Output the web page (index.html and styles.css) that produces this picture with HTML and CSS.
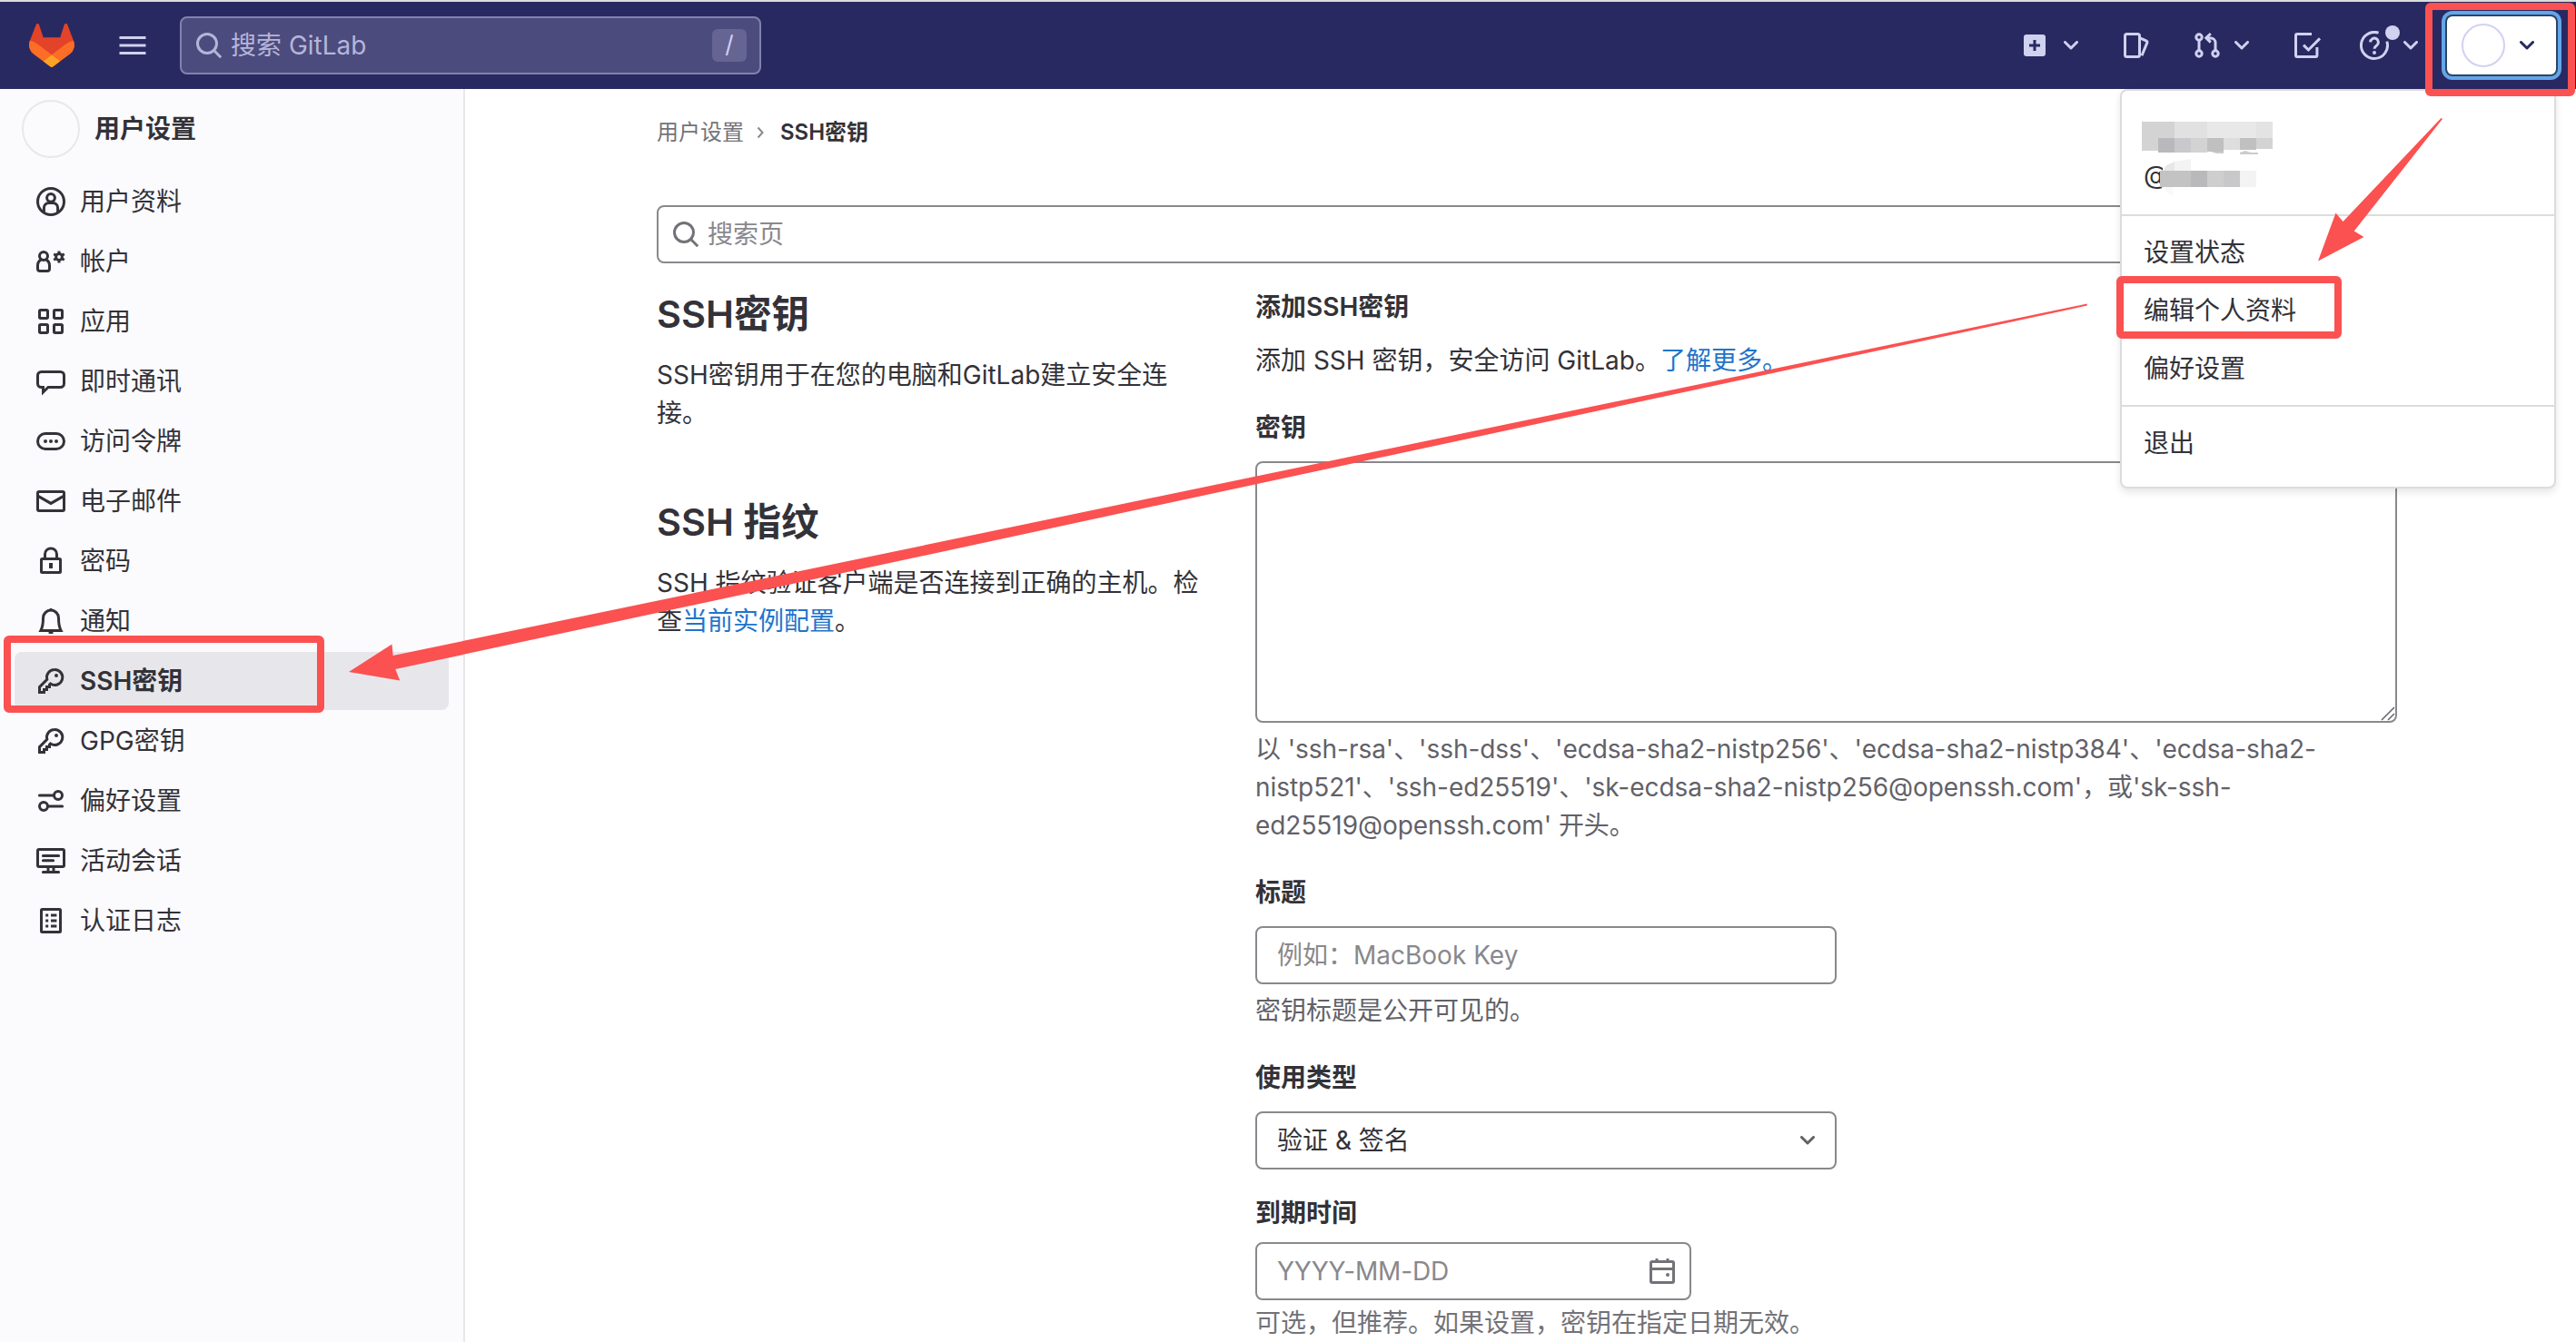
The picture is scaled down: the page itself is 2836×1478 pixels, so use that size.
FILE: index.html
```html
<!DOCTYPE html>
<html lang="zh-CN">
<head>
    <meta charset="UTF-8">
    <meta name="viewport" content="width=device-width, initial-scale=1.0">
    <title>SSH密钥 · 用户设置 · GitLab</title>
    <link rel="stylesheet" href="styles.css">
</head>
<body>
    <!-- Top navigation -->
    <header class="navbar">
        <svg class="logo" viewBox="0 0 25 24">
            <path fill="#E24329" d="m24.507 9.5-.034-.09L21.082.562a.896.896 0 0 0-1.694.091l-2.29 7.01H7.825L5.535.653a.898.898 0 0 0-1.694-.09L.451 9.411.416 9.5a6.297 6.297 0 0 0 2.09 7.278l.012.01.03.022 5.16 3.867 2.56 1.935 1.554 1.176a1.051 1.051 0 0 0 1.268 0l1.555-1.176 2.56-1.935 5.197-3.89.014-.01A6.297 6.297 0 0 0 24.507 9.5z"/>
            <path fill="#FC6D26" d="m24.507 9.5-.034-.09a11.44 11.44 0 0 0-4.56 2.051l-7.447 5.632 4.742 3.584 5.197-3.89.014-.01A6.297 6.297 0 0 0 24.507 9.5z"/>
            <path fill="#FCA326" d="m7.707 20.677 2.56 1.935 1.555 1.176a1.051 1.051 0 0 0 1.268 0l1.555-1.176 2.56-1.935-4.743-3.584-4.755 3.584z"/>
            <path fill="#FC6D26" d="M5.01 11.461a11.43 11.43 0 0 0-4.56-2.05L.416 9.5a6.297 6.297 0 0 0 2.09 7.278l.012.01.03.022 5.16 3.867 4.745-3.584-7.444-5.632z"/>
        </svg>
        <svg class="icon burger" viewBox="0 0 16 16"><path d="M.75 3.75h14.5M.75 8h14.5M.75 12.25h14.5"/></svg>
        <div class="nav-search">
            <svg class="icon" viewBox="0 0 16 16"><circle cx="7" cy="7" r="5.25"/><path d="m11 11 3.6 3.6"/></svg>
            <span class="nav-search-text">搜索 GitLab</span>
            <kbd>/</kbd>
        </div>
        <nav class="nav-items">
            <div class="nav-item nav-new">
                <svg class="icon" viewBox="0 0 16 16"><rect class="solid" x="2" y="2" width="12" height="12" rx="1.5"/><path class="cut" d="M8 5v6M5 8h6"/></svg>
                <svg class="chevron" viewBox="0 0 16 10"><path d="m1.5 1.5 6.5 6.5 6.5-6.5"/></svg>
            </div>
            <div class="nav-item nav-issues">
                <svg class="icon" viewBox="0 0 16 16"><rect x="1.75" y="1.75" width="8" height="12.5" rx="1"/><path d="m10 3.9 3.6 1.7a.7.7 0 0 1 .35.85L11 13.6"/></svg>
            </div>
            <div class="nav-item nav-merge">
                <svg class="icon" viewBox="0 0 16 16"><circle cx="3.5" cy="3.5" r="1.6"/><circle cx="3.5" cy="12.5" r="1.6"/><circle cx="12.5" cy="12.5" r="1.6"/><path d="M3.5 5.1v5.8M12.5 10.9V6.5a2.5 2.5 0 0 0-2.5-2.5H8M9.9 1.5 7.4 3.9l2.5 2.4"/></svg>
                <svg class="chevron" viewBox="0 0 16 10"><path d="m1.5 1.5 6.5 6.5 6.5-6.5"/></svg>
            </div>
            <div class="nav-item nav-todo">
                <svg class="icon" viewBox="0 0 16 16"><path d="M10.5 1.75h-8a.75.75 0 0 0-.75.75v11c0 .4.35.75.75.75h10.2c.4 0 .75-.35.75-.75V9M6 7.8l2.7 2.7 6.3-6.3"/></svg>
            </div>
            <div class="nav-item nav-help">
                <svg class="icon" viewBox="0 0 16 16"><path d="M10.3 1.1A7.25 7.25 0 1 0 14.9 5.8"/><path d="M5.8 6.2a2.2 2.2 0 1 1 3.4 1.9c-.8.5-1.2.9-1.2 1.8"/><circle class="solid" cx="8" cy="12" r="1"/></svg>
                <span class="dot"></span>
                <svg class="chevron" viewBox="0 0 16 10"><path d="m1.5 1.5 6.5 6.5 6.5-6.5"/></svg>
            </div>
            <div class="nav-user">
                <span class="nav-avatar"></span>
                <svg class="chevron" viewBox="0 0 16 10"><path d="m1.5 1.5 6.5 6.5 6.5-6.5"/></svg>
            </div>
        </nav>

        <!-- User menu -->
        <div class="user-menu">
            <div class="menu-user">
                <svg class="menu-name" viewBox="0 0 144 36">
                    <rect width="36" height="18" fill="#d3d3d3"/><rect x="36" width="36" height="18" fill="#e1e1e1"/><rect x="72" width="54" height="18" fill="#e8e8e8"/><rect x="126" width="18" height="18" fill="#e3e3e3"/>
                    <rect y="18" width="18" height="14" fill="#d3d3d3"/><rect x="18" y="18" width="18" height="16" fill="#b9b9bb"/><rect x="36" y="18" width="18" height="16" fill="#c9c9cb"/><rect x="54" y="18" width="18" height="16" fill="#d3d3d3"/><rect x="72" y="18" width="18" height="15" fill="#c0c0c1"/><rect x="90" y="18" width="18" height="13" fill="#dedede"/><rect x="108" y="18" width="18" height="13" fill="#c0c0c1"/><rect x="126" y="18" width="18" height="12" fill="#d3d3d3"/>
                    <path fill="#ccc" d="M76 33h14v2h-8zM108 34l6-2 6 2h8v2h-20z"/>
                </svg>
                <div class="menu-handle">
                    <span>@</span>
                    <svg viewBox="0 0 106 40">
                        <path fill="#fff" d="M3 8h20v24H3z"/>
                        <path fill="#e8e8e8" d="M3 12 7 6l9-4v10z"/><path fill="#f3f3f3" d="m16 2 18-3v13H16z"/><path fill="#f9f9f9" d="M2 30h12v11z"/>
                        <rect y="12" width="16" height="18" fill="#c3c3c4"/><rect x="16" y="12" width="18" height="18" fill="#c3c3c4"/><rect x="34" y="12" width="18" height="18" fill="#b9b9bb"/><rect x="52" y="12" width="18" height="18" fill="#cececf"/><rect x="70" y="12" width="18" height="18" fill="#c8c8ca"/><rect x="88" y="12" width="18" height="18" fill="#f3f3f3"/>
                    </svg>
                </div>
            </div>
            <ul>
                <li>设置状态</li>
                <li>编辑个人资料</li>
                <li>偏好设置</li>
            </ul>
            <ul>
                <li>退出</li>
            </ul>
        </div>
    </header>

    <div class="page">
        <!-- Settings sidebar -->
        <aside class="sidebar">
            <div class="sidebar-title"><span class="avatar"></span>用户设置</div>
            <ul>
                <li>
                    <svg class="icon" viewBox="0 0 16 16"><circle cx="8" cy="8" r="7.25"/><circle cx="8" cy="5.9" r="2.2"/><path d="M4.2 14v-2.6A2.7 2.7 0 0 1 6.9 8.7h2.2a2.7 2.7 0 0 1 2.7 2.7V14"/></svg>
                    <span>用户资料</span>
                </li>
                <li>
                    <svg class="icon" viewBox="0 0 16 16"><circle cx="4" cy="5" r="2.25"/><path d="M2.6 7.1C1.4 7.7.75 8.8.75 10.2v1.8c0 .7.5 1.25 1.25 1.25h4c.7 0 1.25-.5 1.25-1.25v-1.8c0-1.4-.7-2.5-1.85-3.1"/><circle cx="12.5" cy="5.5" r="1.7"/><path d="M12.5 2.2v1.2M12.5 7.6v1.2M9.6 3.9l1.1.6M14.3 6.5l1.1.6M9.6 7.1l1.1-.6M14.3 4.5l1.1-.6"/></svg>
                    <span>帐户</span>
                </li>
                <li>
                    <svg class="icon" viewBox="0 0 16 16"><rect x="1.75" y="1.75" width="4.5" height="4.5" rx=".6"/><rect x="9.75" y="1.75" width="4.5" height="4.5" rx=".6"/><rect x="1.75" y="9.75" width="4.5" height="4.5" rx=".6"/><rect x="9.75" y="9.75" width="4.5" height="4.5" rx=".6"/></svg>
                    <span>应用</span>
                </li>
                <li>
                    <svg class="icon" viewBox="0 0 16 16"><path d="M2.75 2.75h10.5a2 2 0 0 1 2 2v4.5a2 2 0 0 1-2 2H6.5L3.75 14v-2.75h-1a2 2 0 0 1-2-2v-4.5a2 2 0 0 1 2-2z"/></svg>
                    <span>即时通讯</span>
                </li>
                <li>
                    <svg class="icon" viewBox="0 0 16 16"><rect x=".75" y="3.75" width="14.5" height="8.5" rx="4.25"/><circle class="solid" cx="5" cy="8" r="1"/><circle class="solid" cx="8" cy="8" r="1"/><circle class="solid" cx="11" cy="8" r="1"/></svg>
                    <span>访问令牌</span>
                </li>
                <li>
                    <svg class="icon" viewBox="0 0 16 16"><rect x=".75" y="2.75" width="14.5" height="10.5" rx=".75"/><path d="M1 5.2 8 9.2l7-4"/></svg>
                    <span>电子邮件</span>
                </li>
                <li>
                    <svg class="icon" viewBox="0 0 16 16"><rect x="2.75" y="6.75" width="10.5" height="7.5" rx=".5"/><path d="M4.75 6.5V4.2a3.25 3.25 0 0 1 6.5 0v2.3"/><path class="thick" d="M8 9v3"/></svg>
                    <span>密码</span>
                </li>
                <li>
                    <svg class="icon" viewBox="0 0 16 16"><path d="M3.75 6.3a4.25 4.25 0 0 1 8.5 0c0 3.6.4 5.3 1.3 6.95H2.45c.9-1.65 1.3-3.35 1.3-6.95zM8 1v1M6.8 14.2h2.4"/></svg>
                    <span>通知</span>
                </li>
                <li class="active">
                    <svg class="icon" viewBox="0 0 16 16"><path d="M10 1.75a4.25 4.25 0 0 0-4.1 5.4L1.75 11.3v2.95h2.5v-1.5h1.5v-1.5h1.5V10l.5-.5A4.25 4.25 0 1 0 10 1.75z"/><circle class="solid" cx="11" cy="5" r="1"/></svg>
                    <span>SSH密钥</span>
                </li>
                <li>
                    <svg class="icon" viewBox="0 0 16 16"><path d="M10 1.75a4.25 4.25 0 0 0-4.1 5.4L1.75 11.3v2.95h2.5v-1.5h1.5v-1.5h1.5V10l.5-.5A4.25 4.25 0 1 0 10 1.75z"/><circle class="solid" cx="11" cy="5" r="1"/></svg>
                    <span>GPG密钥</span>
                </li>
                <li>
                    <svg class="icon" viewBox="0 0 16 16"><circle cx="12" cy="5" r="2.25"/><circle cx="4" cy="11" r="2.25"/><path d="M1.7 5h8M6.3 11h8" stroke-linecap="round"/></svg>
                    <span>偏好设置</span>
                </li>
                <li>
                    <svg class="icon" viewBox="0 0 16 16"><rect x=".75" y="1.75" width="14.5" height="9.5" rx=".75"/><path d="M3.7 5.2h8.6M3.7 7.9h5.6M3.7 14.25h8.6" stroke-linecap="round"/><path d="M6.5 11.5V14M9.5 11.5V14"/></svg>
                    <span>活动会话</span>
                </li>
                <li>
                    <svg class="icon" viewBox="0 0 16 16"><rect x="2.75" y="1.75" width="10.5" height="12.5" rx=".5"/><path d="M5.1 5h1.5M5.1 8h1.5M5.1 11h1.5M8 5h3.2M8 8h3.2M8 11h3.2"/></svg>
                    <span>认证日志</span>
                </li>
            </ul>
        </aside>

        <main class="content">
            <div class="breadcrumb">
                <span>用户设置</span>
                <svg viewBox="0 0 8 14"><path d="m1.5 1.5 5 5.5-5 5.5"/></svg>
                <strong>SSH密钥</strong>
            </div>
            <div class="page-search">
                <svg class="icon" viewBox="0 0 16 16"><circle cx="7" cy="7" r="5.25"/><path d="m11 11 3.6 3.6"/></svg>
                <span>搜索页</span>
            </div>
            <div class="columns">
                <section class="intro">
                    <h4>SSH密钥</h4>
                    <p>SSH密钥用于在您的电脑和GitLab建立安全连接。</p>
                    <h4>SSH 指纹</h4>
                    <p>SSH 指纹验证客户端是否连接到正确的主机。检查<a>当前实例配置</a>。</p>
                </section>
                <section class="key-form">
                    <h5>添加SSH密钥</h5>
                    <p class="lead">添加 SSH 密钥，安全访问 GitLab。<a>了解更多。</a></p>

                    <label>密钥</label>
                    <div class="key-field">
                        <textarea></textarea>
                        <svg class="grip" viewBox="0 0 16 16"><path d="M1 15 15 1M8 15l7-7"/></svg>
                    </div>
                    <p class="help help-key">以 'ssh-rsa'、'ssh-dss'、'ecdsa-sha2-nistp256'、'ecdsa-sha2-nistp384'、'ecdsa-sha2-nistp521'、'ssh-ed25519'、'sk-ecdsa-sha2-nistp256@openssh.com'，或'sk-ssh-ed25519@openssh.com' 开头。</p>

                    <label>标题</label>
                    <input class="field" type="text" placeholder="例如：MacBook Key">
                    <p class="help">密钥标题是公开可见的。</p>

                    <label>使用类型</label>
                    <div class="field select">
                        <span>验证 &amp; 签名</span>
                        <svg class="chevron" viewBox="0 0 16 10"><path d="m1.5 1.5 6.5 6.5 6.5-6.5"/></svg>
                    </div>

                    <label class="label-date">到期时间</label>
                    <div class="field date">
                        <span>YYYY-MM-DD</span>
                        <svg class="icon" viewBox="0 0 16 16"><rect x="1.75" y="2.75" width="12.5" height="11.5" rx=".75"/><path d="M2 6.75h12M5 1v2M11 1v2"/><circle class="solid" cx="11" cy="10" r="1"/></svg>
                    </div>
                    <p class="help help-date">可选，但推荐。如果设置，密钥在指定日期无效。</p>
                </section>
            </div>
        </main>
    </div>

    <!-- Step markers on top of everything -->
    <svg class="marks" viewBox="0 0 2836 1478">
        <g class="mark-box">
            <rect x="2674" y="7" width="157" height="95" rx="2"/>
            <rect x="2334" y="308" width="240" height="61" rx="2"/>
            <rect x="8" y="704" width="345" height="77" rx="2"/>
        </g>
        <g class="mark-arrow">
            <path d="M2552 287.5 2571.5 234.5 2579.5 244 2687.5 130 2689 131 2591.7 254.5 2602.5 261z"/>
            <path d="M384 740 431.5 709.5 432.7 722 2297.5 334.5 2298 336.5 435.3 737 440.3 749.5z"/>
        </g>
    </svg>
</body>
</html>
```
FILE: styles.css
```css
* {
    box-sizing: border-box;
}

body {
    font-family: Inter, "Noto Sans CJK SC", sans-serif;
    font-size: 28px;
    line-height: 42px;
    color: #333238;
    background-color: #fff;
    margin: 0;
    height: 1478px;
    overflow: hidden;
    position: relative;
}

ul {
    list-style: none;
    margin: 0;
    padding: 0;
}

p, h4, h5 {
    margin: 0;
}

a {
    color: #1f75cb;
}

svg {
    display: block;
    flex-shrink: 0;
    fill: none;
}

.icon {
    width: 32px;
    height: 32px;
    stroke: currentColor;
    stroke-width: 1.5;
}

.icon .solid {
    fill: currentColor;
    stroke: none;
}

.icon .thick {
    stroke-width: 2;
}

.chevron {
    width: 16px;
    height: 10px;
    stroke: currentColor;
    stroke-width: 3;
    stroke-linecap: round;
    stroke-linejoin: round;
}

/* Top navigation */
.navbar {
    position: relative;
    z-index: 10;
    display: flex;
    align-items: center;
    height: 98px;
    padding: 0 22px 0 32px;
    border-top: 2px solid #dbdddc;
    background-color: #292961;
    color: #d1d1f0;
}

.logo {
    width: 50px;
    height: 48px;
}

.burger {
    margin-left: 48px;
}

.nav-search {
    display: flex;
    align-items: center;
    width: 640px;
    height: 64px;
    margin-left: 36px;
    padding: 0 14px;
    border: 2px solid #8282ae;
    border-radius: 8px;
    background-color: #4c4b7d;
    color: #b5b5da;
}

.nav-search-text {
    flex: 1;
    margin-left: 8px;
}

kbd {
    width: 38px;
    height: 36px;
    border-radius: 6px;
    background-color: #656493;
    color: #d1d1f0;
    font-family: inherit;
    font-size: 26px;
    line-height: 34px;
    text-align: center;
}

.nav-items {
    display: flex;
    align-items: center;
    margin-left: auto;
}

.nav-item {
    position: relative;
    display: flex;
    align-items: center;
}

.nav-new {
    gap: 16px;
    margin-right: 48px;
}

.nav-new .cut {
    stroke: #292961;
}

.nav-issues {
    margin-right: 46px;
}

.nav-merge {
    gap: 14px;
    margin-right: 48px;
}

.nav-todo {
    margin-right: 42px;
}

.nav-help {
    gap: 16px;
    margin-right: 32px;
}

.dot {
    position: absolute;
    left: 28px;
    top: -6px;
    width: 16px;
    height: 16px;
    border-radius: 50%;
    background-color: #d1d1f0;
}

.nav-user {
    display: flex;
    align-items: center;
    gap: 16px;
    width: 120px;
    height: 64px;
    padding-left: 16px;
    border-radius: 6px;
    background-color: #fff;
    box-shadow: 0 0 0 2px #2c4462, 0 0 0 6px #63a6e9;
    color: #292961;
}

.nav-avatar {
    width: 48px;
    height: 48px;
    border: 2px solid #d1d1f0;
    border-radius: 50%;
}

/* User menu */
.user-menu {
    position: absolute;
    top: 96px;
    right: 22px;
    width: 480px;
    height: 440px;
    border: 2px solid #dcdcde;
    border-radius: 8px;
    background-color: #fff;
    box-shadow: 0 4px 8px rgba(0, 0, 0, 0.1);
    color: #333238;
}

.menu-user {
    height: 136px;
    padding: 34px 22px 0;
}

.menu-name {
    width: 144px;
    height: 36px;
}

.menu-handle {
    display: flex;
    height: 42px;
    margin-top: 2px;
    padding-left: 2px;
}

.menu-handle span {
    width: 18px;
}

.menu-handle svg {
    position: relative;
    width: 106px;
    height: 40px;
    margin-top: 4px;
    overflow: visible;
}

.user-menu ul {
    padding: 8px 24px;
    border-top: 2px solid #dcdcde;
}

.user-menu li {
    height: 64px;
    line-height: 64px;
}

/* Sidebar */
.page {
    display: flex;
    height: 1380px;
}

.sidebar {
    width: 512px;
    flex-shrink: 0;
    padding: 12px 16px;
    border-right: 2px solid #e8e7eb;
    background-color: #fbfafd;
}

.sidebar-title {
    display: flex;
    align-items: center;
    gap: 16px;
    height: 64px;
    margin-bottom: 16px;
    padding-left: 8px;
    font-weight: 600;
}

.avatar {
    width: 64px;
    height: 64px;
    border: 2px solid #e8e8ea;
    border-radius: 50%;
}

.sidebar li {
    display: flex;
    align-items: center;
    gap: 16px;
    height: 64px;
    margin-bottom: 2px;
    padding-left: 24px;
    border-radius: 8px;
}

.sidebar li.active {
    background-color: #e7e7eb;
    font-weight: 600;
}

/* Content */
.content {
    padding: 27px 0 0 211px;
    width: 2127px;
}

.breadcrumb {
    display: flex;
    align-items: center;
    height: 42px;
    margin-bottom: 59px;
    font-size: 24px;
    color: #737278;
}

.breadcrumb svg {
    width: 8px;
    height: 14px;
    margin: 0 18px 0 14px;
    stroke: #89888d;
    stroke-width: 2;
}

.breadcrumb strong {
    font-weight: 600;
    color: #333238;
}

.page-search {
    display: flex;
    align-items: center;
    gap: 8px;
    height: 64px;
    padding-left: 14px;
    border: 2px solid #89888d;
    border-radius: 8px;
    color: #89888d;
}

.page-search .icon {
    color: #737278;
}

.columns {
    display: flex;
}

.intro {
    width: 659px;
    padding: 30px 48px 0 0;
}

.intro h4 {
    font-size: 41.5px;
    font-weight: 600;
    line-height: 52px;
    margin-bottom: 20px;
}

.intro p {
    margin-bottom: 73px;
}

.key-form {
    width: 1257px;
    padding-top: 27px;
}

.key-form h5, .key-form label {
    display: block;
    font-size: 28px;
    font-weight: 600;
}

.lead {
    margin: 17px 0 32px;
}

.key-form label {
    margin-bottom: 16px;
}

.key-field {
    position: relative;
    height: 288px;
}

textarea {
    display: block;
    width: 100%;
    height: 288px;
    border: 2px solid #89888d;
    border-radius: 8px;
    background-color: #fff;
    resize: none;
}

.grip {
    position: absolute;
    right: 2px;
    bottom: 2px;
    width: 16px;
    height: 16px;
    stroke: #626168;
    stroke-width: 1.5;
}

.help {
    margin: 8px 0 32px;
    color: #626168;
}

.help-key {
    letter-spacing: -0.05px;
}

.field {
    display: flex;
    align-items: center;
    justify-content: space-between;
    width: 640px;
    height: 64px;
    padding: 0 22px;
    border: 2px solid #89888d;
    border-radius: 8px;
    background-color: #fff;
    font-family: inherit;
    font-size: 28px;
}

.field::placeholder {
    color: #89888d;
    opacity: 1;
}

.select .chevron {
    color: #626168;
}

.key-form .label-date {
    margin: 27px 0 11px;
}

.date {
    width: 480px;
    padding-right: 14px;
    color: #89888d;
}

.date span {
    letter-spacing: -0.15px;
}

.date .icon {
    color: #737278;
}

.help-date {
    margin: 4px 0 0;
    color: #737278;
}

/* Step markers */
.marks {
    position: absolute;
    z-index: 20;
    left: 0;
    top: 0;
    width: 2836px;
    height: 1478px;
}

.mark-box {
    stroke: #fb5151;
    stroke-width: 8;
}

.mark-arrow {
    fill: #fb5151;
}
```
